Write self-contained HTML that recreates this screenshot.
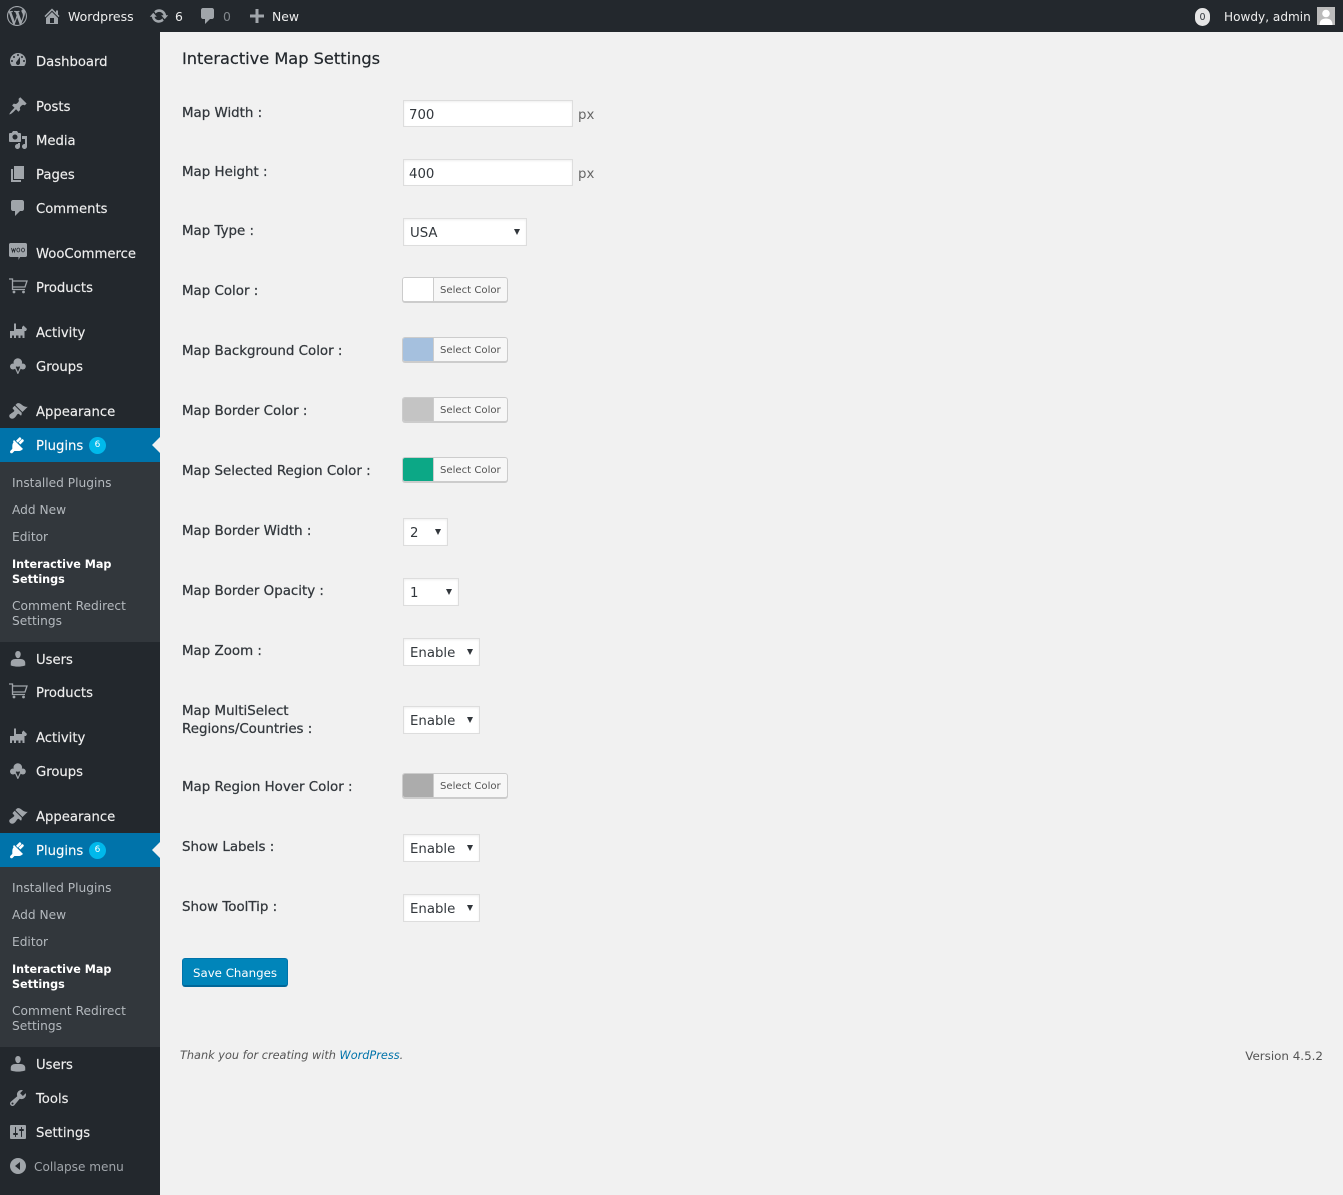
<!DOCTYPE html>
<html><head><meta charset="utf-8"><title>Interactive Map Settings</title>
<style>
html,body{margin:0;padding:0;width:1343px;height:1195px;overflow:hidden;background:#f1f1f1;font-family:"DejaVu Sans","Liberation Sans",sans-serif;}
.b{position:absolute;}
.t{position:absolute;line-height:20px;height:20px;white-space:nowrap;}
.m{left:36px;font-size:13.2px;color:#eee;margin-top:4px;-webkit-text-stroke:.15px #eee;}
.s{left:12px;font-size:12.2px;color:#b4b9be;line-height:15px;height:15px;margin-top:2px;}
.w{color:#fff;font-weight:bold;font-size:11.2px;}
.l{left:182px;font-size:13.4px;color:#32373c;margin-top:3px;-webkit-text-stroke:.25px #32373c;}
.i{position:absolute;fill:#a0a5aa;color:#a0a5aa;}
.box{position:absolute;box-sizing:border-box;background:#fff;border:1px solid #ddd;box-shadow:inset 0 1px 2px rgba(0,0,0,.07);}
.v{position:absolute;left:6px;top:2px;line-height:26px;font-size:13.3px;color:#32373c;}
.a{position:absolute;top:10px;width:0;height:0;border-left:3px solid transparent;border-right:3px solid transparent;border-top:6px solid #32373c;}
.cb{position:absolute;left:402px;box-sizing:border-box;width:106px;height:25px;background:#f7f7f7;border:1px solid #ccc;border-radius:3px;box-shadow:0 1px 0 #ccc;}
.cb i{position:absolute;left:0;top:0;width:30px;height:23px;border-right:1px solid #ccc;border-radius:2px 0 0 2px;}
.cb span{position:absolute;left:37px;top:2px;line-height:22px;font-size:10.1px;color:#555;white-space:nowrap;}
</style></head><body>
<svg width="0" height="0" style="position:absolute">
<symbol id="wp" viewBox="0 0 20 20"><path d="M20 10c0-5.510-4.490-10-10-10C4.480 0 0 4.490 0 10c0 5.520 4.480 10 10 10 5.510 0 10-4.480 10-10zM7.780 15.370L4.370 6.220c.55-.02 1.170-.08 1.170-.08.500-.06.440-1.130-.060-1.110 0 0-1.450.11-2.370.11-.180 0-.370 0-.580-.01C4.120 2.690 6.870 1.110 10 1.110c2.330 0 4.450.87 6.050 2.340-.680-.110-1.650.39-1.650 1.580 0 .740.450 1.360.900 2.100.350.610.550 1.360.550 2.460 0 1.490-1.400 5-1.400 5l-3.030-8.370c.540-.020.820-.170.820-.170.500-.050.440-1.250-.060-1.220 0 0-1.440.120-2.380.120-.870 0-2.330-.120-2.330-.120-.500-.030-.560 1.200-.060 1.220l.920.080 1.260 3.410zM17.410 10c.24-.640.740-1.870.430-4.250.700 1.290 1.050 2.710 1.050 4.250 0 3.290-1.730 6.240-4.400 7.780.970-2.590 1.940-5.200 2.920-7.780zM6.100 18.090C3.120 16.650 1.110 13.530 1.110 10c0-1.300.23-2.480.72-3.590C3.250 10.300 4.670 14.200 6.100 18.090zm4.030-6.630l2.580 6.980c-.86.290-1.760.450-2.710.450-.790 0-1.570-.110-2.290-.330.810-2.380 1.620-4.740 2.420-7.100z"/></symbol>
<symbol id="home" viewBox="0 0 20 20"><path d="M16 8.500l1.530 1.530-1.060 1.060L10 4.620l-6.470 6.470-1.060-1.060L10 2.500l4 4v-2h2v4zm-6-2.460l6 5.990V18H4v-5.970zM12 17v-5H8v5h4z" fill-rule="evenodd"/></symbol>
<symbol id="upd" viewBox="0 0 20 20"><path d="M10.200 3.280c3.530 0 6.430 2.610 6.920 6h2.080l-3.500 4-3.500-4h2.320c-.45-1.970-2.210-3.440-4.320-3.440-1.450 0-2.730.71-3.540 1.800L5.270 5.220C6.530 4.100 8.270 3.280 10.200 3.280zm-.4 13.440c-3.520 0-6.430-2.610-6.920-6H.8l3.500-4c1.170 1.330 2.330 2.670 3.500 4H5.480c.45 1.970 2.210 3.440 4.320 3.440 1.450 0 2.730-.71 3.540-1.800l1.390 2.420c-1.260 1.120-3 1.940-4.930 1.940z"/></symbol>
<symbol id="com" viewBox="0 0 20 20"><path d="M5 2h9c1.100 0 2 .9 2 2v7c0 1.100-.9 2-2 2h-2l-5 5v-5H5c-1.100 0-2-.9-2-2V4c0-1.100.9-2 2-2z"/></symbol>
<symbol id="plus" viewBox="0 0 20 20"><path d="M17 8.500v3h-5.500V17h-3v-5.500H3v-3h5.500V3h3v5.500z"/></symbol>
<symbol id="dash" viewBox="0 0 20 20"><path fill-rule="evenodd" d="M3.760 16h12.480c1.100-1.370 1.760-3.110 1.760-5 0-4.420-3.580-8-8-8s-8 3.580-8 8c0 1.890.66 3.630 1.760 5zM10 4c.55 0 1 .45 1 1s-.45 1-1 1-1-.45-1-1 .45-1 1-1zM6 6c.55 0 1 .45 1 1s-.45 1-1 1-1-.45-1-1 .45-1 1-1zm8 0c.55 0 1 .45 1 1s-.45 1-1 1-1-.45-1-1 .45-1 1-1zm-5.370 5.550L12 7v6c0 1.100-.9 2-2 2s-2-.9-2-2c0-.57.24-1.080.63-1.450zM4 10c.55 0 1 .45 1 1s-.45 1-1 1-1-.45-1-1 .45-1 1-1zm12 0c.55 0 1 .45 1 1s-.45 1-1 1-1-.45-1-1 .45-1 1-1z"/></symbol>
<symbol id="pin" viewBox="0 0 20 20"><path d="M10.440 3.020l1.820-1.820 6.360 6.350-1.830 1.820c-1.050-.68-2.480-.57-3.410.36l-.75.75c-.92.93-1.040 2.350-.35 3.410l-1.830 1.820-2.410-2.410-2.800 2.790c-.42.42-3.380 2.710-3.800 2.290s1.860-3.390 2.280-3.810l2.790-2.790L4.100 9.360l1.830-1.820c1.050.69 2.480.57 3.400-.36l.75-.75c.93-.92 1.050-2.350.36-3.410z"/></symbol>
<symbol id="media" viewBox="0 0 20 20"><path fill-rule="evenodd" d="M13 11V4c0-.55-.45-1-1-1h-1.670L9 1H5L3.670 3H2c-.55 0-1 .45-1 1v7c0 .55.45 1 1 1h10c.55 0 1-.45 1-1zM7 4.500c1.380 0 2.500 1.120 2.500 2.500S8.380 9.500 7 9.500 4.500 8.380 4.500 7 5.620 4.500 7 4.500zM14 6h5v10.500c0 1.380-1.120 2.500-2.500 2.500S14 17.880 14 16.500s1.120-2.500 2.500-2.500c.17 0 .34.02.5.05V9h-3V6zm-4 8.050V13h2v3.500c0 1.380-1.120 2.500-2.500 2.500S7 17.880 7 16.500 8.120 14 9.500 14c.17 0 .34.02.5.05z"/></symbol>
<symbol id="pages" viewBox="0 0 20 20"><path d="M6 15V2h10v13H6zm-1 1h8v2H3V5h2v11z"/></symbol>
<symbol id="cart" viewBox="0 0 20 20"><path fill="none" stroke="currentColor" stroke-width="1.300" d="M1 2h3.500v10.500H17M4.500 4H19l-2 6H4.500"/><circle cx="6" cy="15" r="1.400"/><circle cx="15.500" cy="15" r="1.400"/></symbol>
<symbol id="woo" viewBox="0 0 20 20"><path d="M2.500 1h15c.8 0 1.500.7 1.500 1.500v11c0 .8-.7 1.500-1.500 1.500H12l-1.500 3v-3h-8C1.700 15 1 14.300 1 13.500v-11C1 1.700 1.700 1 2.500 1z"/><path fill="none" stroke="#23282d" stroke-width=".8" d="M3.500 6l1 4 1-3 1 3 1-4M10.300 6a1.500 2 0 1 0 .01 0M15 6a1.500 2 0 1 0 .01 0"/></symbol>
<symbol id="act" viewBox="0 0 20 20"><path d="M2 9H6V1.500H8V7H14V5L15.500 3.500 17 5l2 2-1 2H16.500V16H14.500V13.500H12.500V16H10.500V13.500H8V16H6V13.500H4V16H2z"/></symbol>
<symbol id="grp" viewBox="0 0 20 20"><circle cx="9.800" cy="6.500" r="4.300"/><circle cx="5" cy="10.500" r="3"/><circle cx="14.800" cy="10.500" r="3"/><path d="M6.500 11.500L9.500 18h.7l3.100-6.500h-1.500L10 16 8 11.500z"/></symbol>
<symbol id="app" viewBox="0 0 20 20"><path d="M14.480 11.060L7.410 3.990l1.500-1.500c.5-.56 2.300-.47 3.510.32 1.210.8 1.430 1.280 2.910 2.100 1.180.64 2.450 1.260 4.450.85zm-.71.71L6.700 4.700 4.930 6.470c-.39.39-.39 1.020 0 1.410l1.060 1.060c.39.39.39 1.030 0 1.420-.6.6-1.430 1.110-2.210 1.690-.35.26-.7.53-1.010.84C1.430 13.230.5 15.300 2.100 16.900c1.600 1.600 3.670.67 5.010-.67.3-.31.57-.66.84-1.010.58-.78 1.090-1.610 1.690-2.210.39-.39 1.020-.39 1.410 0l1.060 1.060c.39.39 1.020.39 1.410 0z"/></symbol>
<symbol id="plg" viewBox="0 0 20 20"><path d="M13.110 4.360L9.870 7.600 8 5.730l3.240-3.240c.35-.34 1.050-.2 1.560.32.520.51.660 1.210.31 1.550zm-8 1.770l.91-1.120 9.010 9.010-1.190.84c-.71.71-2.120 1.160-3.410 1.160H6.420L4.600 17.840c-.59.59-1.540.59-2.120 0-.59-.58-.59-1.530 0-2.120l1.820-1.820v-2.990c0-1.300.45-2.710 1.160-3.420zm10.520.1l-3.240 3.240-1.870-1.870 3.240-3.240c.34-.34 1.040-.2 1.560.32.520.51.660 1.210.310 1.550z"/></symbol>
<symbol id="usr" viewBox="0 0 20 20"><path d="M10 9.250c-2.270 0-2.730-3.440-2.730-3.440C7 4.020 7.820 2 9.970 2c2.160 0 2.980 2.020 2.710 3.810 0 0-.41 3.440-2.680 3.440zm0 .75c2 0 2.720 0 2.720 0 2.390 0 4.520 1.500 4.520 3.700v2.800s-3.650 1.130-7.240 1.130c-3.650 0-7.240-1.130-7.240-1.130v-2.800C2.760 11.500 4.700 10 7.230 10z"/></symbol>
<symbol id="tool" viewBox="0 0 20 20"><path fill-rule="evenodd" d="M16.680 9.770c-1.340 1.340-3.300 1.670-4.950.99l-5.410 6.520c-.99.99-2.590.99-3.580 0s-.99-2.590 0-3.570l6.520-5.420c-.68-1.650-.35-3.610.99-4.950 1.280-1.280 3.120-1.620 4.720-1.060l-2.890 2.890 2.820 2.820 2.860-2.870c.53 1.580.18 3.390-1.080 4.650zM3.810 16.210c.4.390 1.030.39 1.420 0 .4-.4.400-1.030 0-1.430-.39-.39-1.020-.39-1.420 0-.39.4-.39 1.030 0 1.430z"/></symbol>
<symbol id="set" viewBox="0 0 20 20"><path fill-rule="evenodd" d="M18 16V4c0-.55-.45-1-1-1H3c-.55 0-1 .45-1 1v12c0 .55.45 1 1 1h14c.55 0 1-.45 1-1zM8 11h1c.55 0 1 .45 1 1s-.45 1-1 1H8v1.500c0 .28-.22.5-.5.5s-.5-.22-.5-.5V13H6c-.55 0-1-.45-1-1s.45-1 1-1h1V5.500c0-.28.22-.5.5-.5s.5.22.5.5V11zm5-2h-1c-.55 0-1-.45-1-1s.45-1 1-1h1V5.500c0-.28.22-.5.5-.5s.5.22.5.5V7h1c.55 0 1 .45 1 1s-.45 1-1 1h-1v5.500c0 .28-.22.5-.5.5s-.5-.22-.5-.5V9z"/></symbol>
<symbol id="col" viewBox="0 0 20 20"><path fill-rule="evenodd" d="M18 10c0-4.420-3.580-8-8-8s-8 3.580-8 8 3.580 8 8 8 8-3.580 8-8zm-6-4v8l-5-4z"/></symbol>
</svg>

<!-- admin bar -->
<div class="b" style="left:0;top:0;width:1343px;height:32px;background:#23282d"></div>
<svg class="i" style="left:7px;top:6px" width="20" height="20"><use href="#wp"/></svg>
<svg class="i" style="left:42px;top:6px" width="20" height="20"><use href="#home"/></svg>
<div class="t" style="left:68px;top:7px;font-size:12.5px;color:#eee">Wordpress</div>
<svg class="i" style="left:149px;top:6px" width="20" height="20"><use href="#upd"/></svg>
<div class="t" style="left:175px;top:7px;font-size:12.4px;color:#eee">6</div>
<svg class="i" style="left:198px;top:6px" width="20" height="20"><use href="#com"/></svg>
<div class="t" style="left:223px;top:7px;font-size:12.4px;color:#82878c">0</div>
<svg class="i" style="left:247px;top:6px" width="20" height="20"><use href="#plus"/></svg>
<div class="t" style="left:272px;top:7px;font-size:12.4px;color:#eee">New</div>
<div class="b" style="left:1195px;top:8px;width:15px;height:18px;border-radius:8px;background:#e5e5e5;color:#32373c;font-size:9.5px;line-height:19px;text-align:center">0</div>
<div class="t" style="left:1224px;top:7px;font-size:12.1px;color:#eee">Howdy, admin</div>
<div class="b" style="left:1317px;top:7px;width:18px;height:18px;background:#bbb;overflow:hidden"><svg width="18" height="18" style="display:block"><circle cx="9" cy="6.500" r="3.800" fill="#fff"/><path d="M2.500 18c0-5 3-6.500 6.500-6.500s6.500 1.500 6.500 6.500z" fill="#fff"/></svg></div>

<!-- sidebar -->
<div class="b" style="left:0;top:32px;width:160px;height:1163px;background:#23282d"></div>
<div class="b" style="left:0;top:428px;width:160px;height:34px;background:#0073aa"></div>
<div class="b" style="left:0;top:462px;width:160px;height:180px;background:#32373c"></div>
<div class="b" style="left:0;top:833px;width:160px;height:34px;background:#0073aa"></div>
<div class="b" style="left:0;top:867px;width:160px;height:180px;background:#32373c"></div>
<div class="b" style="left:152px;top:437px;width:0;height:0;border:8px solid transparent;border-left:0;border-right-color:#f1f1f1"></div>
<div class="b" style="left:152px;top:842px;width:0;height:0;border:8px solid transparent;border-left:0;border-right-color:#f1f1f1"></div>

<svg class="i" style="left:8px;top:50px" width="20" height="20"><use href="#dash"/></svg><div class="t m" style="top:49px">Dashboard</div>
<svg class="i" style="left:8px;top:96px" width="20" height="20"><use href="#pin"/></svg><div class="t m" style="top:94px">Posts</div>
<svg class="i" style="left:8px;top:130px" width="20" height="20"><use href="#media"/></svg><div class="t m" style="top:128px">Media</div>
<svg class="i" style="left:8px;top:164px" width="20" height="20"><use href="#pages"/></svg><div class="t m" style="top:162px">Pages</div>
<svg class="i" style="left:8px;top:198px" width="20" height="20"><use href="#com"/></svg><div class="t m" style="top:196px">Comments</div>
<svg class="i" style="left:8px;top:242px" width="20" height="20"><use href="#woo"/></svg><div class="t m" style="top:241px">WooCommerce</div>
<svg class="i" style="left:8px;top:277px" width="20" height="20"><use href="#cart"/></svg><div class="t m" style="top:275px">Products</div>
<svg class="i" style="left:8px;top:322px" width="20" height="20"><use href="#act"/></svg><div class="t m" style="top:320px">Activity</div>
<svg class="i" style="left:8px;top:356px" width="20" height="20"><use href="#grp"/></svg><div class="t m" style="top:354px">Groups</div>
<svg class="i" style="left:8px;top:401px" width="20" height="20"><use href="#app"/></svg><div class="t m" style="top:399px">Appearance</div>
<svg class="i" style="left:8px;top:435px;fill:#fff" width="20" height="20"><use href="#plg"/></svg><div class="t m" style="top:433px;color:#fff">Plugins</div>
<div class="b" style="left:89px;top:437px;width:17px;height:17px;border-radius:50%;background:#00b9eb;color:#fff;font-size:9px;line-height:17px;text-align:center">6</div>
<div class="t s" style="top:474px">Installed Plugins</div>
<div class="t s" style="top:501px">Add New</div>
<div class="t s" style="top:528px">Editor</div>
<div class="t s w" style="top:555px">Interactive Map</div>
<div class="t s w" style="top:570px">Settings</div>
<div class="t s" style="top:597px">Comment Redirect</div>
<div class="t s" style="top:612px">Settings</div>
<svg class="i" style="left:8px;top:649px" width="20" height="20"><use href="#usr"/></svg><div class="t m" style="top:647px">Users</div>
<svg class="i" style="left:8px;top:682px" width="20" height="20"><use href="#cart"/></svg><div class="t m" style="top:680px">Products</div>
<svg class="i" style="left:8px;top:727px" width="20" height="20"><use href="#act"/></svg><div class="t m" style="top:725px">Activity</div>
<svg class="i" style="left:8px;top:761px" width="20" height="20"><use href="#grp"/></svg><div class="t m" style="top:759px">Groups</div>
<svg class="i" style="left:8px;top:806px" width="20" height="20"><use href="#app"/></svg><div class="t m" style="top:804px">Appearance</div>
<svg class="i" style="left:8px;top:840px;fill:#fff" width="20" height="20"><use href="#plg"/></svg><div class="t m" style="top:838px;color:#fff">Plugins</div>
<div class="b" style="left:89px;top:842px;width:17px;height:17px;border-radius:50%;background:#00b9eb;color:#fff;font-size:9px;line-height:17px;text-align:center">6</div>
<div class="t s" style="top:879px">Installed Plugins</div>
<div class="t s" style="top:906px">Add New</div>
<div class="t s" style="top:933px">Editor</div>
<div class="t s w" style="top:960px">Interactive Map</div>
<div class="t s w" style="top:975px">Settings</div>
<div class="t s" style="top:1002px">Comment Redirect</div>
<div class="t s" style="top:1017px">Settings</div>
<svg class="i" style="left:8px;top:1054px" width="20" height="20"><use href="#usr"/></svg><div class="t m" style="top:1052px">Users</div>
<svg class="i" style="left:8px;top:1088px" width="20" height="20"><use href="#tool"/></svg><div class="t m" style="top:1086px">Tools</div>
<svg class="i" style="left:8px;top:1122px" width="20" height="20"><use href="#set"/></svg><div class="t m" style="top:1120px">Settings</div>
<svg class="i" style="left:8px;top:1156px" width="20" height="20"><use href="#col"/></svg><div class="t" style="left:34px;top:1157px;font-size:12.1px;color:#a0a5aa">Collapse menu</div>

<!-- main -->
<div class="t" style="left:182px;top:49px;font-size:16.2px;color:#23282d;-webkit-text-stroke:.2px #23282d">Interactive Map Settings</div>

<div class="t l" style="top:101px">Map Width :</div>
<div class="box" style="left:403px;top:100px;width:170px;height:27px"><span class="v" style="left:5px">700</span></div>
<div class="t" style="left:578px;top:106px;font-size:13.3px;color:#666">px</div>

<div class="t l" style="top:160px">Map Height :</div>
<div class="box" style="left:403px;top:159px;width:170px;height:27px"><span class="v" style="left:5px">400</span></div>
<div class="t" style="left:578px;top:165px;font-size:13.3px;color:#666">px</div>

<div class="t l" style="top:219px">Map Type :</div>
<div class="box" style="left:403px;top:218px;width:124px;height:28px"><span class="v">USA</span><span class="a" style="left:110px"></span></div>

<div class="t l" style="top:279px">Map Color :</div>
<div class="cb" style="top:277px"><i style="background:#fff"></i><span>Select Color</span></div>

<div class="t l" style="top:339px">Map Background Color :</div>
<div class="cb" style="top:337px"><i style="background:#a5c0de"></i><span>Select Color</span></div>

<div class="t l" style="top:399px">Map Border Color :</div>
<div class="cb" style="top:397px"><i style="background:#c4c4c4"></i><span>Select Color</span></div>

<div class="t l" style="top:459px">Map Selected Region Color :</div>
<div class="cb" style="top:457px"><i style="background:#0ca886"></i><span>Select Color</span></div>

<div class="t l" style="top:519px">Map Border Width :</div>
<div class="box" style="left:403px;top:518px;width:45px;height:28px"><span class="v">2</span><span class="a" style="left:31px"></span></div>

<div class="t l" style="top:579px">Map Border Opacity :</div>
<div class="box" style="left:403px;top:578px;width:56px;height:28px"><span class="v">1</span><span class="a" style="left:42px"></span></div>

<div class="t l" style="top:639px">Map Zoom :</div>
<div class="box" style="left:403px;top:638px;width:77px;height:28px"><span class="v">Enable</span><span class="a" style="left:63px"></span></div>

<div class="t l" style="top:699px">Map MultiSelect</div>
<div class="t l" style="top:717px">Regions/Countries :</div>
<div class="box" style="left:403px;top:706px;width:77px;height:28px"><span class="v">Enable</span><span class="a" style="left:63px"></span></div>

<div class="t l" style="top:775px">Map Region Hover Color :</div>
<div class="cb" style="top:773px"><i style="background:#acacac"></i><span>Select Color</span></div>

<div class="t l" style="top:835px">Show Labels :</div>
<div class="box" style="left:403px;top:834px;width:77px;height:28px"><span class="v">Enable</span><span class="a" style="left:63px"></span></div>

<div class="t l" style="top:895px">Show ToolTip :</div>
<div class="box" style="left:403px;top:894px;width:77px;height:28px"><span class="v">Enable</span><span class="a" style="left:63px"></span></div>

<div class="b" style="left:182px;top:958px;width:106px;height:29px;box-sizing:border-box;background:#0085ba;border:1px solid #0073aa;border-bottom:2px solid #006799;border-radius:3px;color:#fff;font-size:11.8px;line-height:29px;text-align:center;white-space:nowrap">Save Changes</div>

<div class="t" style="left:180px;top:1046px;font-size:11.3px;font-style:italic;color:#555">Thank you for creating with <span style="color:#0073aa">WordPress</span>.</div>
<div class="t" style="right:20px;top:1046px;font-size:11.9px;color:#555">Version 4.5.2</div>
</body></html>
